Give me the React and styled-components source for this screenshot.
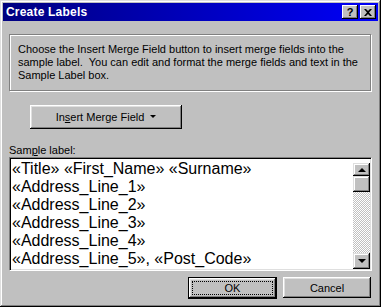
import React from "react";
import styled, { createGlobalStyle } from "styled-components";

const GlobalStyle = createGlobalStyle`
  html, body { margin: 0; padding: 0; background: #c0c0c0; }
  body { font-family: "Liberation Sans", Arial, sans-serif; }
`;

const Window = styled.div`
  width: 381px;
  height: 307px;
  box-sizing: border-box;
  background: #c0c0c0;
  padding: 3px;
  box-shadow: inset -1px -1px #000, inset 1px 1px #dfdfdf,
    inset -2px -2px #808080, inset 2px 2px #fff;
  display: flex;
  flex-direction: column;
`;

const TitleBar = styled.div`
  height: 18px;
  background: linear-gradient(to right, #000080, #0000f8);
  display: flex;
  align-items: center;
  padding: 0 2px 0 3px;
`;

const Title = styled.span`
  flex: 1;
  color: #fff;
  font: bold 12px "Liberation Sans", Arial, sans-serif;
  letter-spacing: 0.2px;
`;

const TitleButton = styled.div`
  width: 16px;
  height: 14px;
  box-sizing: border-box;
  margin-left: 2px;
  background: #c0c0c0;
  box-shadow: inset -1px -1px #000, inset 1px 1px #fff, inset -2px -2px #808080;
  display: flex;
  align-items: center;
  justify-content: center;
  font: bold 11px "Liberation Sans", Arial, sans-serif;
  color: #000;
`;

const Body = styled.div`
  flex: 1;
  display: flex;
  flex-direction: column;
  padding: 13px 6px 0 6px;
`;

const InfoBox = styled.div`
  height: 57px;
  box-sizing: border-box;
  border: 1px solid #808080;
  box-shadow: 1px 1px #fff, inset 1px 1px #fff;
  padding: 8px 8px 0 8px;
  font-size: 11px;
  line-height: 13px;
  color: #000;
  margin-right: 1px;
`;

const Button = styled.button`
  box-sizing: border-box;
  width: ${(p) => p.$w}px;
  height: ${(p) => p.$h}px;
  background: #c0c0c0;
  border: ${(p) => (p.$default ? "1px solid #000" : "none")};
  box-shadow: inset -1px -1px #000, inset 1px 1px #fff, inset -2px -2px #808080,
    inset 2px 2px #dfdfdf;
  font: 11px "Liberation Sans", Arial, sans-serif;
  color: #000;
  padding: 0;
  display: flex;
  align-items: center;
  justify-content: center;
  position: relative;
`;

const Focus = styled.span`
  position: absolute;
  inset: 3px;
  border: 1px dotted #000;
`;

const Caret = styled.span`
  display: inline-block;
  margin-left: 6px;
  border-left: 3px solid transparent;
  border-right: 3px solid transparent;
  border-top: 3px solid #000;
  vertical-align: middle;
  position: relative;
  top: -1px;
`;

const MergeRow = styled.div`
  padding: 14px 0 0 21px;
`;

const Label = styled.div`
  margin-top: 15px;
  font-size: 11px;
  line-height: 12px;
  height: 13px;
`;

const U = styled.span`
  text-decoration: underline;
`;

const TextBox = styled.div`
  height: 114px;
  box-sizing: border-box;
  background: #fff;
  border-top: 1px solid #808080;
  border-left: 1px solid #808080;
  border-right: 1px solid #fff;
  border-bottom: 1px solid #fff;
  box-shadow: inset 1px 1px #000, inset -1px -1px #dfdfdf;
  display: flex;
`;

const Lines = styled.div`
  flex: 1;
  padding: 2px 0 0 2px;
  font: 16px "Liberation Sans", Arial, sans-serif;
  line-height: 18px;
  color: #000;
  white-space: nowrap;
  overflow: hidden;
`;

const ScrollBar = styled.div`
  width: 17px;
  margin: 5px 1px 1px 0;
  display: flex;
  flex-direction: column;
  background-color: #fff;
  background-image: conic-gradient(#c0c0c0 25%, #fff 0 50%, #c0c0c0 0 75%, #fff 0);
  background-size: 2px 2px;
`;

const ScrollBtn = styled.div`
  height: ${(p) => p.$h}px;
  background: #c0c0c0;
  box-shadow: inset -1px -1px #000, inset 1px 1px #dfdfdf, inset -2px -2px #808080,
    inset 2px 2px #fff;
  display: flex;
  align-items: center;
  justify-content: center;
`;

const Track = styled.div`
  flex: 1;
`;

const Arrow = styled.span`
  width: 0;
  height: 0;
  border-left: 4px solid transparent;
  border-right: 4px solid transparent;
  ${(p) =>
    p.$up ? "border-bottom: 4px solid #000;" : "border-top: 4px solid #000;"}
`;

const Footer = styled.div`
  display: flex;
  justify-content: flex-end;
  gap: 6px;
  margin-top: 6px;
  padding-right: 1px;
`;

const lines = [
  "«Title» «First_Name» «Surname»",
  "«Address_Line_1»",
  "«Address_Line_2»",
  "«Address_Line_3»",
  "«Address_Line_4»",
  "«Address_Line_5», «Post_Code»",
];

export default function App() {
  return (
    <>
      <GlobalStyle />
      <Window>
        <TitleBar>
          <Title>Create Labels</Title>
          <TitleButton>?</TitleButton>
          <TitleButton>
            <svg width="8" height="7" viewBox="0 0 8 7">
              <path d="M0 0h2l2 2 2-2h2L5 3.5 8 7H6L4 5 2 7H0l3-3.5z" fill="#000" />
            </svg>
          </TitleButton>
        </TitleBar>
        <Body>
          <InfoBox>
            Choose the Insert Merge Field button to insert merge fields into the
            sample label.&nbsp; You can edit and format the merge fields and text
            in the Sample Label box.
          </InfoBox>
          <MergeRow>
            <Button $w={152} $h={24}>
              In<U>s</U>ert Merge Field
              <Caret />
            </Button>
          </MergeRow>
          <Label>
            Sam<U>p</U>le label:
          </Label>
          <TextBox>
            <Lines>
              {lines.map((l) => (
                <div key={l}>{l}</div>
              ))}
            </Lines>
            <ScrollBar>
              <ScrollBtn $h={13}>
                <Arrow $up />
              </ScrollBtn>
              <ScrollBtn $h={16} />
              <Track />
              <ScrollBtn $h={16}>
                <Arrow />
              </ScrollBtn>
            </ScrollBar>
          </TextBox>
          <Footer>
            <Button $w={89} $h={22} $default>
              <Focus />
              OK
            </Button>
            <Button $w={88} $h={21}>
              Cancel
            </Button>
          </Footer>
        </Body>
      </Window>
    </>
  );
}
